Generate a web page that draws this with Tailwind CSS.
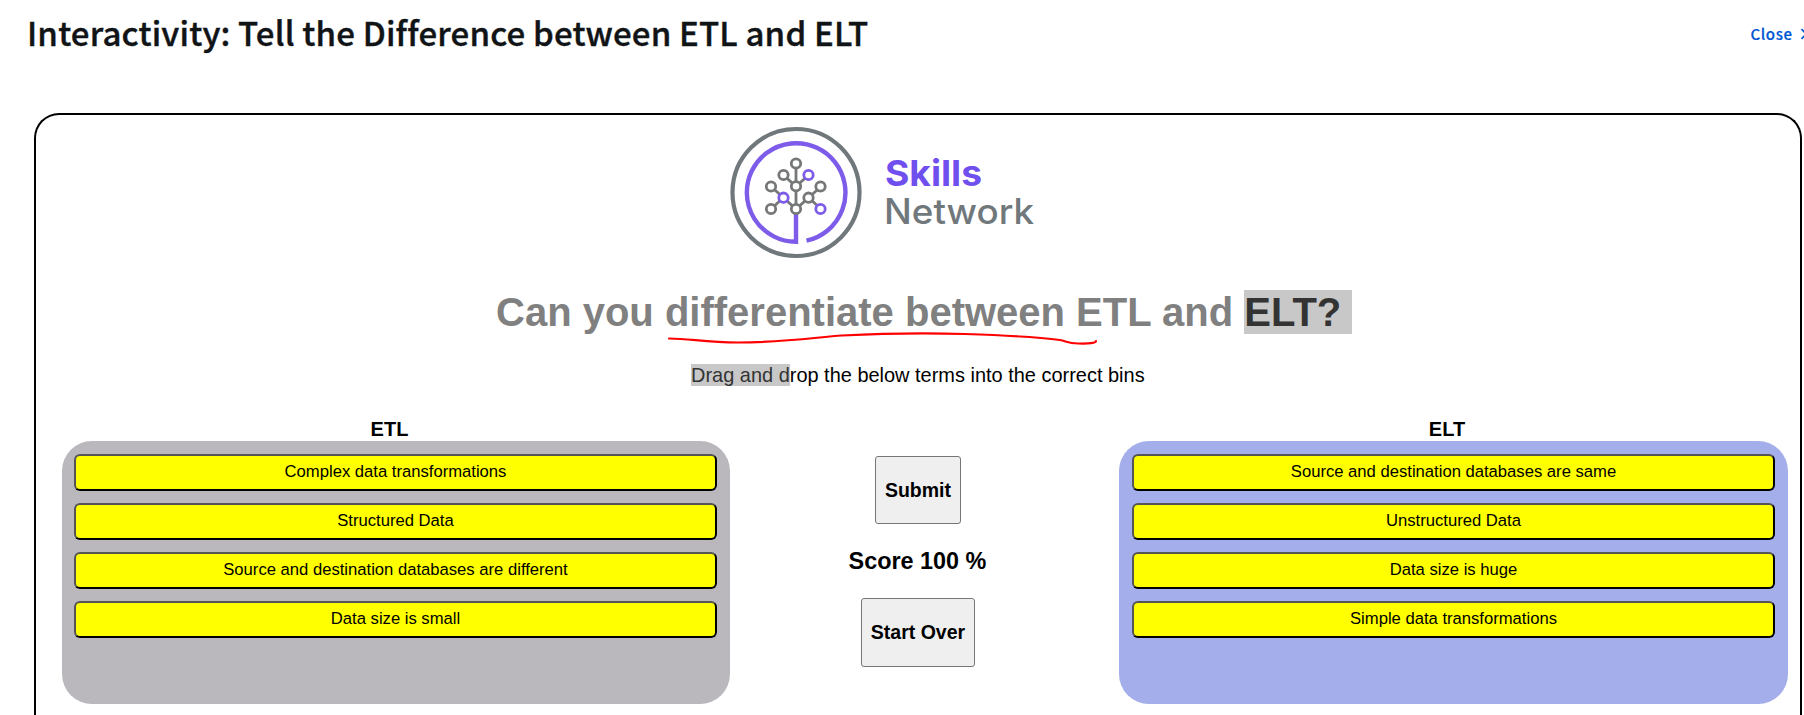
<!DOCTYPE html>
<html lang="en">
<head>
<meta charset="utf-8">
<title>Interactivity: Tell the Difference between ETL and ELT</title>
<script src="https://cdn.jsdelivr.net/npm/@tailwindcss/browser@4"></script>
</head>
<body class="h-[715px] w-[1804px] overflow-hidden bg-white font-['Liberation_Sans',Arial,sans-serif] text-black">
<header class="flex h-[113px] justify-between pl-[27px] font-['Noto_Sans_CJK_SC',sans-serif]">
  <h1 class="pt-[8px] text-[33px] leading-[48px] font-medium tracking-[0.17px] whitespace-nowrap text-[#111416] [-webkit-text-stroke:0.4px_#111416]">Interactivity: Tell the Difference between ETL and ELT</h1>
  <a class="mt-[22px] flex h-6 w-[54px] items-center overflow-hidden pl-[0.5px] text-[15px] leading-6 font-medium tracking-[0.6px] whitespace-nowrap text-[#0056d2] [-webkit-text-stroke:0.2px_#0056d2]"><span class="w-[50.500px] shrink-0">Close</span><svg class="h-3 w-3 shrink-0" viewBox="0 0 12 12" fill="none" stroke="currentColor" stroke-width="1.6"><path d="M.5 1l4.500 5-4.500 5"/></svg></a>
</header>
<main class="relative ml-[34px] h-[602px] w-[1768px] rounded-t-[25px] border-2 border-b-0 border-black">
  <svg class="mt-[8px] ml-[690px] block h-[140px] w-[330px]" viewBox="726 123 330 140" fill="none">
    <circle cx="796" cy="192.500" r="63.500" stroke="#70787c" stroke-width="4.200"/>
    <path d="M796 214v27.800A49.300 49.300 0 1 1 806.500 240.700" stroke="#7c5ce8" stroke-width="4.400"/>
    <g stroke="#757778" stroke-width="2.800">
      <path d="M796 163v46M783.500 175l12.500 11.500 12.500-11.500M771 186.500l25 22.500 25-22.500M771 209l12.500-11.500M808.500 197.500l12.500 11.500"/>
      <g fill="#fff"><circle cx="796" cy="163.500" r="4.700"/><circle cx="783.500" cy="175" r="4.700"/><circle cx="796" cy="186.300" r="4.700"/><circle cx="771" cy="186.500" r="4.700"/><circle cx="820.500" cy="186.500" r="4.700"/><circle cx="808.500" cy="197.700" r="4.700"/><circle cx="771" cy="209" r="4.700"/><circle cx="796" cy="209" r="4.700"/>
      <g stroke="#7c5ce8"><circle cx="808.500" cy="175" r="4.700"/><circle cx="783.500" cy="197.700" r="4.700"/><circle cx="820.500" cy="209" r="4.700"/></g></g>
    </g>
    <text x="885" y="185.500" font-family="Inter, sans-serif" font-size="36" font-weight="700" fill="#6f4fee" textLength="97" lengthAdjust="spacingAndGlyphs">Skills</text>
    <text x="884" y="224" font-family="Inter, sans-serif" font-size="35" font-weight="500" fill="#70787c" textLength="150" lengthAdjust="spacingAndGlyphs">Network</text>
  </svg>
  <h2 class="mt-[27px] ml-[460px] w-max text-[40px] leading-[45px] font-bold whitespace-pre text-[#808080]">Can you differentiate between ETL and <span class="bg-[#c8c8c8] text-[#333]">ELT? </span></h2>
  <svg class="absolute top-[215px] left-[630px] h-4 w-[434px]" viewBox="666 330 434 16" fill="none" stroke="#f00" stroke-width="2.200" stroke-linecap="round"><path d="M669 338.500C690 338.500 705 342.500 738 342.500C785 342.500 818 337 842 335.500C890 333 920 332.500 965 334C1010 335.500 1045 338 1060 340C1066 341 1068 343.500 1078 343.500C1089 344 1096 343 1096 341"/></svg>
  <p class="mt-[29px] ml-[655px] w-max text-[19.97px] leading-[23px] whitespace-nowrap"><span class="bg-[#c8c8c8] text-[#333]">Drag and d</span>rop the below terms into the correct bins</p>
  <div class="mt-[30px] ml-[26px] flex w-[1726px] justify-between">
    <section class="w-[668px]">
      <h3 class="-ml-[13px] h-[24px] text-center text-[20px] leading-[24px] font-bold">ETL</h3>
      <div class="flex h-[263px] flex-col gap-3 rounded-[30px] bg-[#bab8bc] pt-[13px] pr-[13px] pl-3 text-center text-[16.64px] leading-[31px] *:h-[37px] *:rounded-md *:border-2 *:border-t-[#555] *:border-r-black *:border-b-black *:border-l-[#555] *:bg-[#ff0]">
        <div>Complex data transformations</div><div>Structured Data</div><div>Source and destination databases are different</div><div>Data size is small</div>
      </div>
    </section>
    <div class="mr-[14px] flex w-[160px] flex-col items-center pt-[39px] font-bold">
      <button class="h-[68px] w-[86px] rounded-[3px] border border-[#767676] bg-[#efefef] pt-[2px] pl-px text-[19.5px]">Submit</button>
      <p class="mt-[22px] h-[30px] text-[23.4px] leading-[30px] whitespace-nowrap">Score 100 %</p>
      <button class="mt-[22px] h-[69px] w-[114px] rounded-[3px] border border-[#767676] bg-[#efefef] pl-px text-[19.5px] whitespace-nowrap">Start Over</button>
    </div>
    <section class="w-[669px]">
      <h3 class="-ml-[13px] h-[24px] text-center text-[20px] leading-[24px] font-bold">ELT</h3>
      <div class="flex h-[263px] flex-col gap-3 rounded-[30px] bg-[#a3aeea] px-[13px] pt-[13px] text-center text-[16.64px] leading-[31px] *:h-[37px] *:rounded-md *:border-2 *:border-t-[#555] *:border-r-black *:border-b-black *:border-l-[#555] *:bg-[#ff0]">
        <div>Source and destination databases are same</div><div>Unstructured Data</div><div>Data size is huge</div><div>Simple data transformations</div>
      </div>
    </section>
  </div>
</main>
</body>
</html>
